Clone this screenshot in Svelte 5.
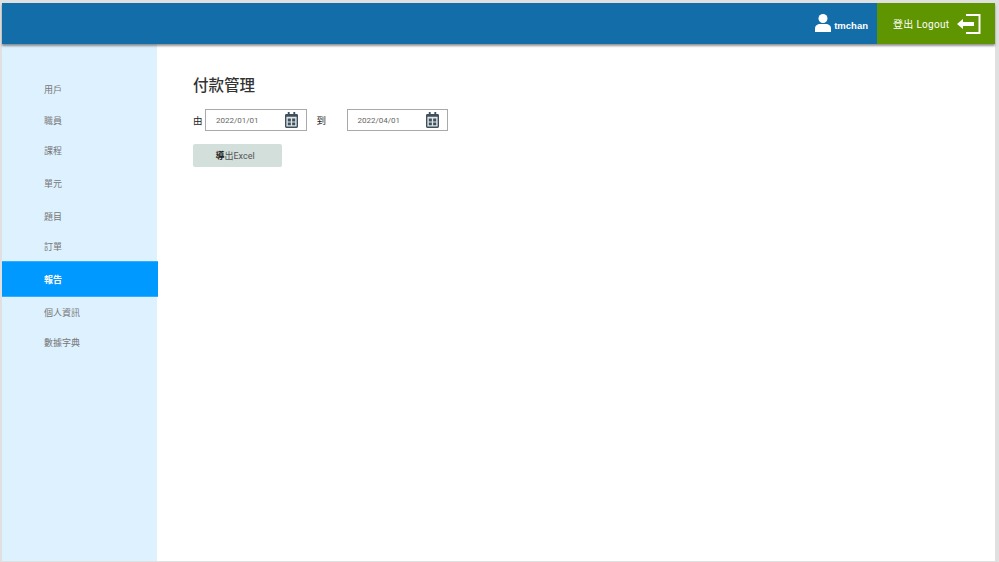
<script>
  const nav = [
    { label: '用戶', h: 32 },
    { label: '職員', h: 30 },
    { label: '課程', h: 30 },
    { label: '單元', h: 36 },
    { label: '題目', h: 30 },
    { label: '訂單', h: 30 },
    { label: '報告', h: 36, active: true },
    { label: '個人資訊', h: 30 },
    { label: '數據字典', h: 30 }
  ];
  const dates = ['2022/01/01', '2022/04/01'];
</script>

{#snippet calendar()}
  <svg class="cal" viewBox="0 0 14 17" width="13" height="16" aria-hidden="true">
    <path fill="#3f4f5c" d="M3 0h2v2h4V0h2v2h1.5A1.5 1.5 0 0 1 14 3.500v12a1.500 1.500 0 0 1-1.500 1.500h-11A1.500 1.500 0 0 1 0 15.500v-12A1.500 1.500 0 0 1 1.500 2H3z"/>
    <rect x="1.500" y="5" width="11" height="10.500" fill="#dfe6e6"/>
    <path fill="#3f4f5c" d="M3 7h3.300v3H3zM7.700 7H11v3H7.700zM3 11.200h3.300v3H3zM7.700 11.200H11v3H7.700z"/>
  </svg>
{/snippet}

<div class="page">
  <header class="top">
    <div class="user">
      <svg viewBox="0 0 16 18" width="16" height="18" aria-hidden="true">
        <circle cx="8" cy="4.500" r="4.500" fill="#fff"/>
        <path fill="#fff" d="M0 18v-3.500C0 11.500 2.500 10 5 10h6c2.500 0 5 1.500 5 4.500V18z"/>
      </svg>
      <span>tmchan</span>
    </div>
    <button class="logout">
      <span>登出 Logout</span>
      <svg viewBox="0 0 24 20" width="24" height="20" aria-hidden="true">
        <path fill="none" stroke="#fff" stroke-width="2" d="M9 1h13.500v18H9"/>
        <path fill="#fff" d="M0 10l6-5v3h11v4H6v3z"/>
      </svg>
    </button>
  </header>

  <div class="body">
    <aside class="side">
      <ul>
        {#each nav as item}
          <li class:active={item.active} style="height:{item.h}px">{item.label}</li>
        {/each}
      </ul>
    </aside>

    <main class="main">
      <h1>付款管理</h1>
      <div class="filters">
        <span class="lab">由</span>
        <div class="date">
          <span>{dates[0]}</span>
          {@render calendar()}
        </div>
        <span class="lab to">到</span>
        <div class="date">
          <span>{dates[1]}</span>
          {@render calendar()}
        </div>
      </div>
      <button class="export"><b>導</b>出Excel</button>
    </main>
  </div>
</div>

<style>
  :global(body) {
    margin: 0;
    background: #e0e0e0;
    overflow: hidden;
  }
  .page {
    box-sizing: border-box;
    width: 999px;
    height: 562px;
    padding: 3px 4px 1px 2px;
    display: flex;
    flex-direction: column;
    font-family: Roboto, "Noto Sans CJK TC", sans-serif;
    overflow: hidden;
  }
  .top {
    flex: none;
    height: 41px;
    background: #126da8;
    box-shadow: 0 2px 2px rgba(60, 60, 60, 0.55);
    display: flex;
    justify-content: flex-end;
    align-items: stretch;
    position: relative;
    z-index: 2;
  }
  .user {
    display: flex;
    align-items: center;
    gap: 3px;
    padding-right: 9px;
    color: #fff;
    font-size: 9.500px;
    font-weight: 700;
    font-family: "Liberation Sans", "Noto Sans CJK TC", sans-serif;
  }
  .user svg {
    margin-top: -2px;
  }
  .user span {
    margin-top: 3px;
  }
  .logout {
    width: 118px;
    border: 0;
    padding: 0 14px 0 16px;
    background: #5f9500;
    color: #fff;
    font: 400 10px Roboto, "Noto Sans CJK TC", sans-serif;
    letter-spacing: 0.300px;
    display: flex;
    justify-content: space-between;
    align-items: center;
  }
  .body {
    flex: 1;
    display: flex;
    min-height: 0;
    background: #fff;
  }
  .side {
    flex: none;
    width: 155px;
    background: #def1ff;
  }
  .side ul {
    list-style: none;
    margin: 0;
    padding: 29px 0 0;
  }
  .side li {
    box-sizing: border-box;
    width: 155px;
    padding-left: 42px;
    display: flex;
    align-items: center;
    color: #777;
    font-size: 9px;
  }
  .side li.active {
    width: 156px;
    background: #0099ff;
    color: #fff;
    font-weight: 700;
    box-shadow: inset 0 1px 0 #33adff, inset 0 -1px 0 #33adff;
  }
  .main {
    flex: 1;
    padding: 31px 0 0 36px;
  }
  h1 {
    margin: 0;
    font-size: 15.500px;
    line-height: 22px;
    font-weight: 500;
    color: #333;
  }
  .filters {
    margin-top: 12px;
    display: flex;
    align-items: center;
    height: 22px;
  }
  .lab {
    font-size: 9.500px;
    color: #222;
    width: 12px;
  }
  .lab.to {
    margin-left: 10px;
    width: 30px;
  }
  .date {
    box-sizing: border-box;
    width: 101.500px;
    height: 22px;
    border: 1px solid #a9a9a9;
    background: #fff;
    display: flex;
    align-items: center;
    justify-content: space-between;
    padding: 0 8px 0 10px;
    font-size: 8px;
    color: #666;
  }
  .cal {
    flex: none;
  }
  .export {
    display: block;
    margin-top: 13px;
    width: 89px;
    height: 23px;
    border: 0;
    border-radius: 2px;
    padding: 0 5px 0 0;
    background: #d3dfdb;
    color: #555;
    font: 9px Roboto, "Noto Sans CJK TC", sans-serif;
  }
  .export b {
    color: #222;
  }
</style>
